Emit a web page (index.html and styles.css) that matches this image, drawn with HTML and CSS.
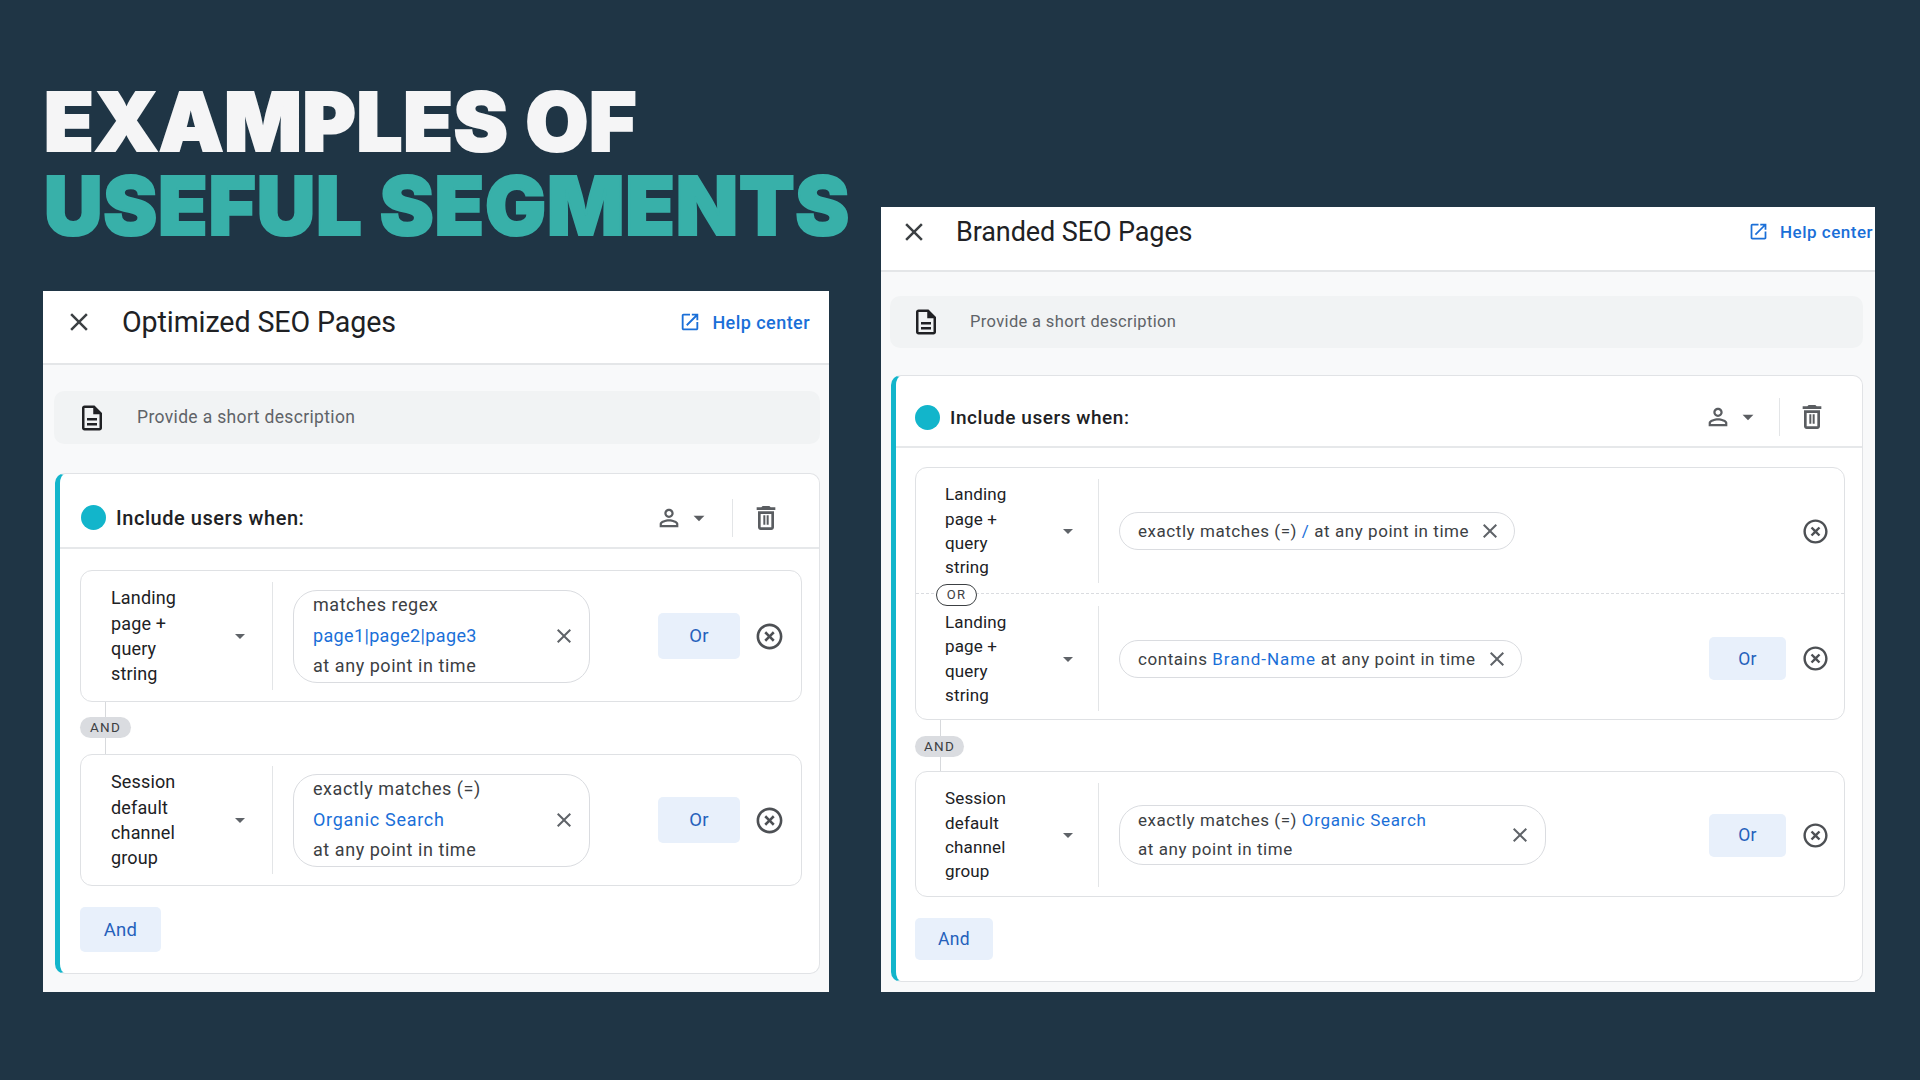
FILE: index.html
```html
<!DOCTYPE html>
<html lang="en">
<head>
<meta charset="utf-8">
<title>Examples of useful segments</title>
<link rel="stylesheet" href="styles.css">
</head>
<body>
<svg class="sprite" aria-hidden="true">
  <symbol id="i-close" viewBox="0 0 24 24"><path d="M19 6.41 17.59 5 12 10.59 6.41 5 5 6.41 10.59 12 5 17.59 6.41 19 12 13.41 17.59 19 19 17.59 13.41 12z"/></symbol>
  <symbol id="i-open" viewBox="0 0 24 24"><path d="M19 19H5V5h7V3H5c-1.11 0-2 .9-2 2v14c0 1.1.89 2 2 2h14c1.1 0 2-.9 2-2v-7h-2v7zM14 3v2h3.59l-9.83 9.83 1.41 1.41L19 6.41V10h2V3h-7z"/></symbol>
  <symbol id="i-doc" viewBox="0 0 24 24"><path d="M8 16h8v2H8zm0-4h8v2H8zm6-10H6c-1.1 0-2 .9-2 2v16c0 1.1.89 2 1.99 2H18c1.1 0 2-.9 2-2V8l-6-6zm4 18H6V4h7v5h5v11z"/></symbol>
  <symbol id="i-person" viewBox="0 0 24 24"><path d="M12 5.9c1.16 0 2.1.94 2.1 2.1s-.94 2.1-2.1 2.1S9.9 9.16 9.9 8s.94-2.1 2.1-2.1m0 9c2.97 0 6.1 1.46 6.1 2.1v1.1H5.9V17c0-.64 3.13-2.1 6.1-2.1M12 4C9.79 4 8 5.79 8 8s1.79 4 4 4 4-1.79 4-4-1.79-4-4-4zm0 9c-2.67 0-8 1.34-8 4v3h16v-3c0-2.66-5.33-4-8-4z"/></symbol>
  <symbol id="i-drop" viewBox="0 0 24 24"><path d="M7 10l5 5 5-5z"/></symbol>
  <symbol id="i-trash" viewBox="0 0 24 24"><path d="M16 9v10H8V9h8m-1.5-6h-5l-1 1H5v2h14V4h-3.5l-1-1zM18 7H6v12c0 1.1.9 2 2 2h8c1.1 0 2-.9 2-2V7zM10 10h1.5v7H10zm2.5 0H14v7h-1.5z"/></symbol>
  <symbol id="i-cancel" viewBox="0 0 24 24"><path d="M14.59 8L12 10.59 9.41 8 8 9.41 10.59 12 8 14.59 9.41 16 12 13.41 14.59 16 16 14.59 13.41 12 16 9.41 14.59 8zM12 2C6.47 2 2 6.47 2 12s4.47 10 10 10 10-4.47 10-10S17.53 2 12 2zm0 18c-4.41 0-8-3.59-8-8s3.59-8 8-8 8 3.59 8 8-3.59 8-8 8z"/></symbol>
</svg>

<main class="slide">
  <section class="left-col">
    <h1 class="headline"><span class="headline-a">EXAMPLES OF</span><span class="headline-b">USEFUL SEGMENTS</span></h1>

    <article class="panel panel-a">
      <header class="panel-head">
        <svg class="ic ic-close"><use href="#i-close"/></svg>
        <h2 class="panel-title">Optimized SEO Pages</h2>
        <a class="help"><svg class="ic ic-help"><use href="#i-open"/></svg><span>Help center</span></a>
      </header>
      <div class="panel-body">
        <div class="desc"><svg class="ic ic-doc"><use href="#i-doc"/></svg><span>Provide a short description</span></div>
        <div class="card">
          <div class="card-head">
            <span class="dot"></span>
            <span class="include">Include users when:</span>
            <svg class="ic ic-person"><use href="#i-person"/></svg>
            <svg class="ic ic-drop-lg"><use href="#i-drop"/></svg>
            <span class="vsep"></span>
            <svg class="ic ic-trash"><use href="#i-trash"/></svg>
          </div>
          <div class="card-body">
            <div class="group">
              <div class="row">
                <div class="dim"><span class="dim-name">Landing page + query string</span><svg class="ic ic-caret"><use href="#i-drop"/></svg></div>
                <div class="cond">
                  <div class="pill"><div class="pill-text"><div>matches regex</div><div class="val val-tight">page1|page2|page3</div><div>at any point in time</div></div><svg class="ic ic-x"><use href="#i-close"/></svg></div>
                  <button class="btn btn-or">Or</button>
                  <svg class="ic ic-cancel"><use href="#i-cancel"/></svg>
                </div>
              </div>
            </div>
            <div class="and-link"><span class="and-chip">AND</span></div>
            <div class="group">
              <div class="row">
                <div class="dim"><span class="dim-name">Session default channel group</span><svg class="ic ic-caret"><use href="#i-drop"/></svg></div>
                <div class="cond">
                  <div class="pill"><div class="pill-text"><div>exactly matches (=)</div><div class="val">Organic Search</div><div>at any point in time</div></div><svg class="ic ic-x"><use href="#i-close"/></svg></div>
                  <button class="btn btn-or">Or</button>
                  <svg class="ic ic-cancel"><use href="#i-cancel"/></svg>
                </div>
              </div>
            </div>
            <button class="btn btn-and">And</button>
          </div>
        </div>
      </div>
    </article>
  </section>

  <article class="panel panel-b">
    <header class="panel-head">
      <svg class="ic ic-close"><use href="#i-close"/></svg>
      <h2 class="panel-title">Branded SEO Pages</h2>
      <a class="help"><svg class="ic ic-help"><use href="#i-open"/></svg><span>Help center</span></a>
    </header>
    <div class="panel-body">
      <div class="desc"><svg class="ic ic-doc"><use href="#i-doc"/></svg><span>Provide a short description</span></div>
      <div class="card">
        <div class="card-head">
          <span class="dot"></span>
          <span class="include">Include users when:</span>
          <svg class="ic ic-person"><use href="#i-person"/></svg>
          <svg class="ic ic-drop-lg"><use href="#i-drop"/></svg>
          <span class="vsep"></span>
          <svg class="ic ic-trash"><use href="#i-trash"/></svg>
        </div>
        <div class="card-body">
          <div class="group">
            <div class="row row-first">
              <div class="dim"><span class="dim-name">Landing page + query string</span><svg class="ic ic-caret"><use href="#i-drop"/></svg></div>
              <div class="cond">
                <div class="pill pill-line"><div class="pill-text">exactly matches (=) <span class="val">/</span> at any point in time</div><svg class="ic ic-x"><use href="#i-close"/></svg></div>
                <svg class="ic ic-cancel"><use href="#i-cancel"/></svg>
              </div>
            </div>
            <div class="or-sep"><span class="or-chip">OR</span></div>
            <div class="row row-second">
              <div class="dim"><span class="dim-name">Landing page + query string</span><svg class="ic ic-caret"><use href="#i-drop"/></svg></div>
              <div class="cond">
                <div class="pill pill-line"><div class="pill-text">contains <span class="val val-wide">Brand-Name</span> at any point in time</div><svg class="ic ic-x"><use href="#i-close"/></svg></div>
                <button class="btn btn-or">Or</button>
                <svg class="ic ic-cancel"><use href="#i-cancel"/></svg>
              </div>
            </div>
          </div>
          <div class="and-link"><span class="and-chip">AND</span></div>
          <div class="group">
            <div class="row row-third">
              <div class="dim"><span class="dim-name">Session default channel group</span><svg class="ic ic-caret"><use href="#i-drop"/></svg></div>
              <div class="cond">
                <div class="pill pill-wide"><div class="pill-text"><div>exactly matches (=) <span class="val">Organic Search</span></div><div>at any point in time</div></div><svg class="ic ic-x"><use href="#i-close"/></svg></div>
                <button class="btn btn-or">Or</button>
                <svg class="ic ic-cancel"><use href="#i-cancel"/></svg>
              </div>
            </div>
          </div>
          <button class="btn btn-and">And</button>
        </div>
      </div>
    </div>
  </article>
</main>
</body>
</html>
```
FILE: styles.css
```css
* { box-sizing: border-box; }
html, body { margin: 0; padding: 0; }
body { width: 1920px; height: 1080px; overflow: hidden; background: #1f3545; font-family: Roboto, "Liberation Sans", sans-serif; color: #202124; }
.sprite { display: none; }
.ic { display: block; flex: none; fill: currentColor; }

.slide { height: 1080px; display: flex; align-items: flex-end; gap: 52px; padding: 0 45px 88px 43px; }
.left-col { width: 786px; flex: none; }

.headline { margin: 0 0 43px 1px; font: 900 81px/84px Inter, sans-serif; letter-spacing: .85px; white-space: nowrap; -webkit-text-stroke: 2.2px currentColor; }
.headline-a, .headline-b { display: block; }
.headline-a { color: #f5f5f6; }
.headline-b { color: #38b0a9; }

.panel { background: #fff; display: flex; flex-direction: column; overflow: hidden; }
.panel-a { --fs: 18px; --lh: 25.3px; height: 701px; }
.panel-b { --fs: 17px; --lh: 24.3px; width: 994px; height: 785px; flex: none; }

.panel-head { display: flex; align-items: center; border-bottom: 2px solid #e4e6e8; flex: none; }
.panel-a .panel-head { height: 74px; padding: 0 19px 10px 21px; }
.panel-b .panel-head { height: 65px; padding: 0 2px 14px 18px; }
.ic-close { color: #3c4043; }
.panel-a .ic-close { width: 30px; height: 30px; margin-right: 28px; }
.panel-b .ic-close { width: 30px; height: 30px; margin-right: 27px; }
.panel-title { margin: 0; font-weight: 400; letter-spacing: -.1px; color: #202124; }
.panel-a .panel-title { font-size: 28.6px; }
.panel-b .panel-title { font-size: 27px; }
.help { margin-left: auto; display: flex; align-items: center; color: #1a6fd8; font-weight: 500; }
.panel-a .help { font-size: 18px; letter-spacing: .45px; }
.panel-b .help { font-size: 17px; letter-spacing: .5px; }
.panel-a .ic-help { width: 22px; height: 22px; margin-right: 11px; }
.panel-b .ic-help { width: 21px; height: 21px; margin-right: 11px; }

.panel-body { flex: 1; background: #f8f9fa; display: flex; flex-direction: column; min-height: 0; }
.panel-a .panel-body { padding: 26px 9px 19px 11px; }
.panel-b .panel-body { padding: 24px 12px 11px 9px; }

.desc { display: flex; align-items: center; background: #f1f3f4; border-radius: 10px; color: #5f6368; flex: none; }
.desc span { padding-bottom: 2px; }
.panel-a .desc { height: 53px; padding-left: 23px; font-size: 17.5px; letter-spacing: .35px; }
.panel-b .desc { height: 52px; padding-left: 21px; font-size: 16.5px; letter-spacing: .35px; }
.ic-doc { color: #202124; }
.panel-a .ic-doc { width: 30px; height: 30px; margin-right: 30px; }
.panel-b .ic-doc { width: 30px; height: 30px; margin-right: 29px; }

.card { flex: 1; background: #fff; border: 1px solid #e1e3e6; border-left: 5px solid #12b5cb; border-radius: 10px; display: flex; flex-direction: column; }
.panel-a .card { margin: 29px 0 0 1px; }
.panel-b .card { margin: 27px 0 0 1px; }

.card-head { display: flex; align-items: center; border-bottom: 2px solid #e6e8ea; flex: none; }
.panel-a .card-head { height: 75px; padding: 14px 0 0 21px; }
.panel-b .card-head { height: 72px; padding: 12px 0 0 19px; }
.dot { width: 25px; height: 25px; border-radius: 50%; background: #12b5cb; flex: none; margin-right: 10px; }
.include { font-weight: 500; letter-spacing: .55px; margin-right: auto; }
.panel-a .include { font-size: 20px; }
.panel-b .include { font-size: 19px; }
.ic-person, .ic-drop-lg, .ic-trash { color: #5a5d61; }
.ic-person { width: 28px; height: 28px; }
.ic-drop-lg { width: 26px; height: 26px; margin-left: 3px; }
.vsep { width: 1px; height: 38px; background: #e3e5e7; margin-left: 20px; }
.panel-b .vsep { margin-left: 18px; }
.ic-trash { width: 32px; height: 32px; }
.panel-a .ic-trash { margin: 0 37px 0 17px; }
.panel-b .ic-trash { margin: 0 34px 0 16px; }

.card-body { flex: 1; display: flex; flex-direction: column; align-items: stretch; }
.panel-a .card-body { padding: 21px 17px 21px 20px; }
.panel-b .card-body { padding: 19px 17px 21px 19px; }

.group { border: 1px solid #dfe1e4; border-radius: 12px; flex: none; }
.row { display: flex; align-items: stretch; }
.panel-a .row { height: 130px; padding: 11px 0; }
.panel-b .row-first { height: 125px; padding: 11px 0 10px; }
.panel-b .row-second { height: 125px; padding: 12px 0 8px; }
.panel-b .row-third { height: 124px; padding: 11px 0 9px; }

.dim { display: flex; align-items: center; font-size: var(--fs); line-height: var(--lh); flex: none; color: #202124; letter-spacing: .15px; }
.panel-a .dim { width: 191px; padding-left: 30px; }
.panel-b .dim { width: 182px; padding-left: 29px; }
.dim-name { width: 82px; }
.ic-caret { color: #5f6368; margin-left: auto; width: 24px; height: 24px; }
.panel-a .ic-caret { margin-right: 20px; }
.panel-b .ic-caret { margin-right: 18px; }

.cond { flex: 1; display: flex; align-items: center; border-left: 1px solid #e3e5e7; min-width: 0; padding-left: 20px; }

.pill { display: flex; align-items: center; border: 1px solid #dadce0; border-radius: 24px; font-size: var(--fs); color: #3c4043; letter-spacing: .55px; }
.panel-a .pill { width: 297px; height: 93px; padding-left: 19px; line-height: 30.5px; }
.pill-text { white-space: nowrap; }
.val { color: #1a6fd8; letter-spacing: .7px; }
.val-tight { letter-spacing: .35px; }
.val-wide { letter-spacing: .95px; }
.ic-x { color: #5f6368; width: 24px; height: 24px; margin-left: auto; }
.panel-a .ic-x { margin-right: 13px; }
.pill-line { height: 38px; padding: 0 12px 0 18px; }
.pill-line .ic-x { margin-left: 9px; }
.pill-wide { width: 427px; height: 60px; padding-left: 18px; line-height: 29.5px; }
.pill-wide .ic-x { margin-right: 13px; }

.btn { font-family: inherit; font-weight: 400; border: 0; border-radius: 5px; background: #e8f0fb; color: #2561bb; padding: 0; flex: none; letter-spacing: .3px; }
.panel-a .btn { font-size: 18.5px; }
.panel-b .btn { font-size: 17.5px; }
.btn-or { margin-left: auto; }
.panel-a .btn-or { width: 82px; height: 46px; margin-right: 14px; }
.panel-b .btn-or { width: 77px; height: 43px; margin-right: 15px; }
.ic-cancel { color: #4d5054; }
.panel-a .ic-cancel { width: 31px; height: 31px; margin-right: 16px; }
.panel-b .ic-cancel { width: 29px; height: 29px; margin-right: 14px; }
.pill-line + .ic-cancel { margin-left: auto; }
.panel-a .btn-and { width: 81px; height: 45px; margin-top: 21px; }
.panel-b .btn-and { width: 78px; height: 42px; margin-top: 21px; }
.btn-and { align-self: flex-start; }

.and-link { position: relative; display: flex; flex: none; }
.panel-a .and-link { padding: 15px 0 16px; }
.panel-b .and-link { padding: 16px 0 14px; }
.and-link::before { content: ""; position: absolute; left: 25px; top: 0; bottom: 0; width: 1px; background: #d7d9dc; }
.and-chip { position: relative; background: #dadce0; color: #3c4043; border-radius: 11px; height: 21px; line-height: 21px; font-size: 13.5px; font-weight: 400; letter-spacing: 1.2px; text-align: center; }
.panel-a .and-chip { width: 51px; }
.panel-b .and-chip { width: 49px; }

.or-sep { position: relative; border-top: 1px dashed #dadce0; height: 0; }
.or-chip { position: absolute; left: 20px; top: -10px; width: 41px; height: 22px; line-height: 20px; background: #fff; border: 1px solid #3c4043; border-radius: 11px; font-size: 13px; font-weight: 400; letter-spacing: 1.2px; text-align: center; color: #3c4043; }
```
